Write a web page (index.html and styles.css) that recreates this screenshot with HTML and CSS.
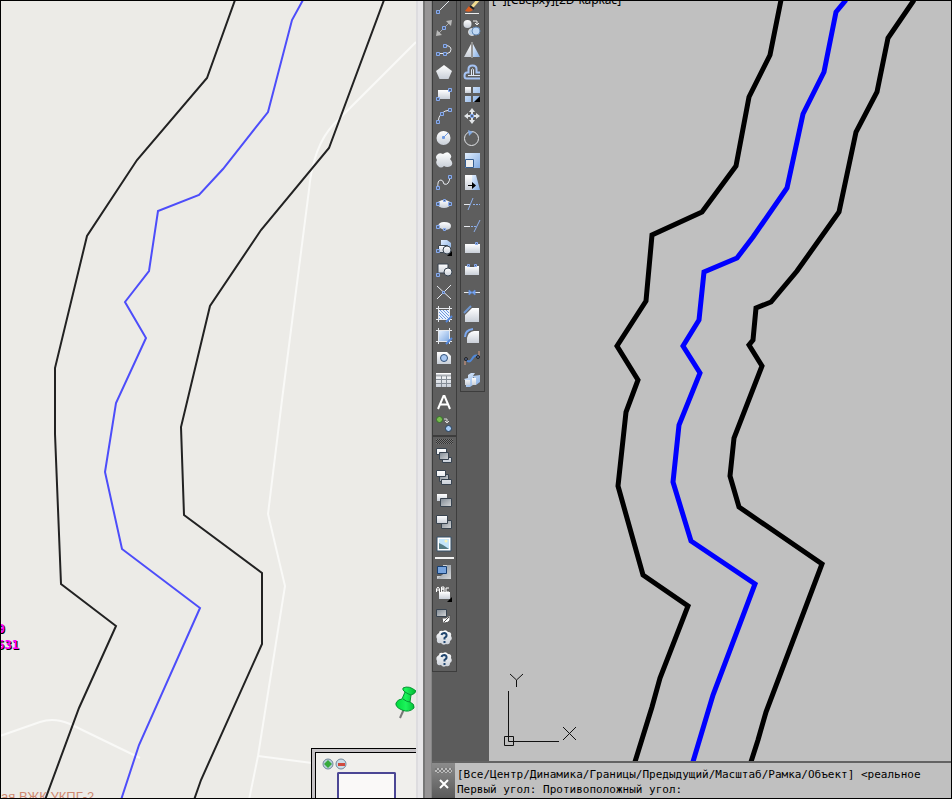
FILE: index.html
```html
<!DOCTYPE html>
<html lang="ru">
<head>
<meta charset="utf-8">
<title>Карта и чертёж</title>
<link rel="stylesheet" href="styles.css">
</head>
<body>
<svg class="defs" aria-hidden="true">
  <defs>
    <linearGradient id="gw" x1="0" y1="0" x2="0" y2="1"><stop offset="0" stop-color="#fff"/><stop offset="1" stop-color="#c9cfd8"/></linearGradient>
    <linearGradient id="gb" x1="0" y1="0" x2="1" y2="1"><stop offset="0" stop-color="#e2efff"/><stop offset="1" stop-color="#82abe2"/></linearGradient>
    <linearGradient id="gg" x1="0" y1="0" x2="1" y2="1"><stop offset="0" stop-color="#7d8791"/><stop offset="1" stop-color="#d5d7d9"/></linearGradient>
    <linearGradient id="pin" x1="0" y1="0" x2="1" y2="0"><stop offset="0" stop-color="#00d93c"/><stop offset=".5" stop-color="#1cf45b"/><stop offset="1" stop-color="#00b62f"/></linearGradient>
    <pattern id="hatch" width="3" height="3" patternUnits="userSpaceOnUse"><path d="M0 0L3 3" stroke="#6d98dc"/></pattern>
    <symbol id="cloud" viewBox="0 0 18 18"><path class="w" d="M4 4Q4 1 8 2Q11 0 13 3Q17 3 16 7Q18 10 15 12Q15 16 11 15Q8 17 6 14Q1 15 2 10Q0 6 4 4Z"/><path d="M6.500 6Q7 4 9.500 4Q12 4.500 11.500 7Q11 8 9.500 9V10.500" fill="none" stroke="#21466f" stroke-width="2"/><path d="M8.500 12h2v2h-2z" fill="#21466f"/></symbol>
  </defs>
</svg>
<div class="frame">
  <section class="map" aria-label="Карта">
    <svg class="scene" viewBox="1 1 415 797" preserveAspectRatio="xMinYMin slice">
      <g class="road">
        <path d="M416 42L334 124Q313 146 309 190L282 400L268 514L285 586L258 756L249 800"/>
        <path d="M0 736L40 722Q54 717 70 724L140 758"/>
        <path d="M258 756L312 763"/>
      </g>
      <text class="place" x="1" y="801">ая ВЖК УКПГ-2</text>
      <g class="bank">
        <path d="M235 0L207 78L137 160L87 236L55 368L55 434L61 584L116 626L79 708L45 800"/>
        <path d="M384 0L329 148L261 230L210 306L181 427L184 515L262 573L262 644L201 780L194 800"/>
      </g>
      <path class="stream" d="M303 0L292 20L268 112L223 169L199 195L158 211L149 271L125 302L146 338L116 403L105 472L122 549L200 608L139 745L121 800"/>
      <g class="mark"><text x="5" y="633">9</text><text x="19" y="649">531</text></g>
      <g>
        <path d="M404 709L400 718" stroke="#777" stroke-width="2"/>
        <path d="M403 688Q409 685 416 691Q415 694 411 695L410 702Q415 704 414 708Q409 713 402 710Q395 707 396 703Q398 699 402 699L405 692Q402 690 403 688Z" fill="url(#pin)" stroke="#079534"/>
        <path d="M403 699Q407 702 410 702M405 692Q408 694 411 695" fill="none" stroke="#079534"/>
      </g>
    </svg>
    <div class="overview">
      <div class="overview-body">
        <div class="zooms">
          <button aria-label="Увеличить"><svg width="12" height="12" viewBox="0 0 12 12"><circle cx="6" cy="6" r="5" fill="#b8d0dc" stroke="#71879b"/><path d="M6 2L10 6L6 10L2 6Z" fill="#36aa3c"/></svg></button>
          <button aria-label="Уменьшить"><svg width="12" height="12" viewBox="0 0 12 12"><circle cx="6" cy="6" r="5" fill="#cbdce7" stroke="#71879b"/><path d="M3 5H10V8H3Z" fill="#d04a3e"/></svg></button>
        </div>
        <div class="extent"></div>
      </div>
    </div>
  </section>
  <div class="edge"></div>
  <section class="cad" aria-label="Чертёж">
    <div class="workspace">
      <div class="dock">
        <div class="column">
          <div class="toolbar scrolled">
            <button aria-label="Отрезок"><svg viewBox="0 0 18 18"><path class="lw" d="M3 15L16 2"/><path class="n" d="M1.500 13.500h3v3h-3z"/></svg></button>
            <button aria-label="Прямая"><svg viewBox="0 0 18 18"><path d="M4 14L15 3" stroke="#aaa"/><path d="M1 17L2 11L7 16ZM17 1L11 2L16 7Z" fill="#b8b8b8"/><path class="n" d="M7.500 7.500h3v3h-3z"/></svg></button>
            <button aria-label="Полилиния"><svg viewBox="0 0 18 18"><path class="lw" d="M3 12.500H12Q16 12 16 8.500Q16 5 11 4.500"/><path class="n" d="M1.500 11.500h3v3h-3zM8.500 11.500h3v3h-3zM8.500 3.500h3v3h-3z"/></svg></button>
            <button aria-label="Многоугольник"><svg viewBox="0 0 18 18"><path class="w" d="M9 2L17 8L13.500 16H4.500L1 8Z"/></svg></button>
            <button aria-label="Прямоугольник"><svg viewBox="0 0 18 18"><path class="w" d="M3 5H15V14H3Z"/><path class="n" d="M1.500 12.500h3v3h-3zM13.500 3.500h3v3h-3z"/></svg></button>
            <button aria-label="Дуга"><svg viewBox="0 0 18 18"><path class="lw" d="M3 15Q4 4 15 3"/><path class="n" d="M1.500 13.500h3v3h-3zM5.500 5.500h3v3h-3zM13.500 1.500h3v3h-3z"/></svg></button>
            <button aria-label="Круг"><svg viewBox="0 0 18 18"><circle class="w" cx="8.500" cy="9" r="7"/><path d="M8 9L13 4" stroke="#6f9ae2"/><path d="M7.500 7.500h2v2h-2z" fill="none" stroke="#6f9ae2"/></svg></button>
            <button aria-label="Облако"><svg viewBox="0 0 18 18"><path class="w" d="M2 4Q4 1 8 3Q12 0 14 2Q18 5 15 8Q19 12 16 15Q12 17 9 15Q6 18 3 15Q0 12 2 9Q0 6 2 4Z"/></svg></button>
            <button aria-label="Сплайн"><svg viewBox="0 0 18 18"><path class="lw" d="M3 15Q2 7 6 7Q8 7 9 11Q14 13 15 4"/><path class="n" d="M1.500 13.500h3v3h-3zM13.500 2.500h3v3h-3z"/></svg></button>
            <button aria-label="Эллипс"><svg viewBox="0 0 18 18"><ellipse class="w" cx="9" cy="9" rx="6.500" ry="4"/><path class="n" d="M1.500 7.500h3v3h-3zM13.500 7.500h3v3h-3z"/><path class="n" d="M8.500 4.500h2v2h-2z"/></svg></button>
            <button aria-label="Эллиптическая дуга"><svg viewBox="0 0 18 18"><path class="w" d="M3 9Q4 5 9 5Q16 5 16 9Q16 13 9 13L5 11Z"/><path class="n" d="M1.500 8.500h3v3h-3zM8.500 11.500h2v2h-2z"/></svg></button>
            <button aria-label="Вставить блок"><svg viewBox="0 0 18 18"><path class="b" d="M6 1H12L16 4V11H6Z"/><path class="w o" d="M3.500 6.500H12.500V13.500H3.500Z"/><circle class="w o" cx="12" cy="11" r="4"/><path class="n" d="M1.500 10.500h3v3h-3z"/><path d="M17 12V17H12Z"/></svg></button>
            <button aria-label="Создать блок"><svg viewBox="0 0 18 18"><path class="w o" d="M3 3H13V12H3Z"/><circle class="w o" cx="13" cy="11" r="4"/><path class="n" d="M1.500 12.500h3v3h-3z"/></svg></button>
            <button aria-label="Точка"><svg viewBox="0 0 18 18"><path class="lw" d="M2 3L16 16M2 16L16 2"/><path class="n" d="M7.500 8.500h2v2h-2z"/></svg></button>
            <button aria-label="Штриховка"><svg viewBox="0 0 18 18"><path fill="#e9f2ff" d="M4 5H14V14H4Z"/><path fill="url(#hatch)" d="M4 5H14V14H4Z"/><path class="lw" d="M1 3.500H17M1 14.500H17M3.500 1V17M14.500 1V17"/><path d="M11 17L17 11" stroke="#5588dc" stroke-width="2"/></svg></button>
            <button aria-label="Градиент"><svg viewBox="0 0 18 18"><path class="b" d="M4 4H14V14H4Z"/><path class="lw" d="M1 3.500H17M1 14.500H17M3.500 1V17M14.500 1V17"/><path d="M11 17L17 11" stroke="#5588dc" stroke-width="2"/></svg></button>
            <button aria-label="Область"><svg viewBox="0 0 18 18"><path class="w" d="M2 3H12L16 7V15H2Z"/><circle cx="9" cy="9" r="3.500" fill="#a7c7f2" stroke="#305078"/></svg></button>
            <button aria-label="Таблица"><svg viewBox="0 0 18 18"><path class="w" d="M1 2H16V16H1Z"/><path d="M1 4.500H16" stroke="#a9adb3" stroke-width="2"/><path d="M1 8.500H16M1 12.500H16M6.500 5V16M11.500 5V16" stroke="#858d96"/></svg></button>
            <button aria-label="Текст"><svg viewBox="0 0 18 18"><path d="M3 16L8.500 3H9.500L15 16M5 11.500H13" fill="none" stroke="#fff" stroke-width="2"/></svg></button>
            <button aria-label="Добавить выбранное"><svg viewBox="0 0 18 18"><circle cx="4.500" cy="4.500" r="3" fill="#79bd50" stroke="#35702b"/><path d="M9 4H12V8M10 6L12 8L14 6" fill="none" stroke="#ddd"/><circle cx="13.500" cy="13.500" r="3" fill="#a8cdf8" stroke="#233d5b"/></svg></button>
          </div>
          <div class="toolbar order">
            <div class="grip"></div>
            <button aria-label="На передний план"><svg viewBox="0 0 18 18"><path class="w o" d="M1.500 1.500H11.500V7.500H1.500ZM7.500 10.500H16.500V15.500H7.500Z"/><path class="g" d="M4.500 5.500H13.500V12.500H4.500Z"/></svg></button>
            <button aria-label="На задний план"><svg viewBox="0 0 18 18"><path class="g" d="M4.500 5.500H13.500V12.500H4.500Z"/><path class="w o" d="M1.500 1.500H10.500V7.500H1.500ZM6.500 10.500H16.500V15.500H6.500Z"/></svg></button>
            <button aria-label="Перед объектом"><svg viewBox="0 0 18 18"><path class="w" d="M2 3H12V10H2Z"/><path class="g" d="M5.500 7.500H16.500V15.500H5.500Z"/></svg></button>
            <button aria-label="За объектом"><svg viewBox="0 0 18 18"><path class="g" d="M6.500 7.500H16.500V15.500H6.500Z"/><path class="w o" d="M1.500 2.500H12.500V10.500H1.500Z"/></svg></button>
            <button aria-label="Изображение"><svg viewBox="0 0 18 18"><path d="M2 2H16V16H2Z" fill="#fff" stroke="#34516b"/><path d="M4 4H14V14H4Z" fill="#c4e5fa"/><path d="M4 8L8 10L14 14H4Z" fill="#557b83"/><circle cx="11" cy="6" r="1.500" fill="#faf5b8"/></svg></button>
            <hr>
            <button aria-label="Подложка"><svg viewBox="0 0 18 18"><path d="M8 2H16V16H2V13H8Z" fill="#ced0d1"/><path d="M2 16L12 8V2H16V16Z" fill="url(#gg)"/><path d="M2.500 3.500H11.500V10.500H2.500Z" fill="#78a4dd" stroke="#173f72"/></svg></button>
            <button aria-label="Текст наверх"><svg viewBox="0 0 18 18"><path class="w" d="M4 7H15V14H4Z"/><path d="M1.500 7V4L3 2L4.500 4V7M2 5H4M6.500 7V2H9V4H7H9V7H6.500M14 3H11V7H14" fill="none" stroke="#fff"/><path d="M17 12V17H12Z"/></svg></button>
            <button aria-label="Штриховку назад"><svg viewBox="0 0 18 18"><path class="g" d="M1.500 2.500H11.500V9.500H1.500Z"/><path d="M7 11H11L15 8V13Q14 16 8 16Z" fill="#fff" stroke="#555"/><path d="M9 15L14 10" stroke="#555"/></svg></button>
            <button aria-label="Справка"><svg viewBox="0 0 18 18"><use href="#cloud"/></svg></button>
            <button aria-label="Справка по команде"><svg viewBox="0 0 18 18"><use href="#cloud"/></svg></button>
          </div>
        </div>
        <div class="column">
          <div class="toolbar scrolled">
            <button aria-label="Стереть"><svg viewBox="0 0 18 18"><path d="M17 1L9 10" stroke="#f1dc91" stroke-width="3"/><path d="M6 9L10 13Q7 16 2 14Z" fill="#d85d20"/><path d="M7 9L11 12" stroke="#222" stroke-width="2"/><path d="M2 16.500H16" stroke="#eee"/></svg></button>
            <button aria-label="Копировать"><svg viewBox="0 0 18 18"><circle class="w" cx="4.500" cy="5" r="4"/><circle cx="9" cy="13" r="3.500" fill="#b8d1eb" stroke="#ddd"/><circle cx="13" cy="12" r="4" fill="#c0d9f5" stroke="#6389b6"/><path d="M10 2H14V6M12 4L14 6L16 4" fill="none" stroke="#eee"/></svg></button>
            <button aria-label="Зеркало"><svg viewBox="0 0 18 18"><path class="w" d="M8 3V16H1Z"/><path class="b" d="M10 3V16H17Z"/><path d="M9 1V17" stroke="#ccc"/></svg></button>
            <button aria-label="Подобие"><svg viewBox="0 0 18 18"><path d="M17 15.500H3.500Q1.500 15.500 1.500 13Q1.500 9.500 4 9.500H5.500V6Q5.500 2.500 9.500 2.500Q13.500 2.500 13.500 6V9.500H17" fill="none" stroke="#a5c3f4" stroke-width="2"/><path d="M17 12.500H5M8.500 12V6.500Q9.500 5 10.500 6.500V12" fill="none" stroke="#dfe8f6"/></svg></button>
            <button aria-label="Массив"><svg viewBox="0 0 18 18"><path class="w" d="M2 2H8V8H2Z"/><path class="b" d="M10 2H17V8H10ZM2 11H8V17H2ZM10 11H17V17H10Z"/><path d="M17 11V17H11Z"/></svg></button>
            <button aria-label="Перенести"><svg viewBox="0 0 18 18"><path d="M9 1L12 5H10V7H8V5H6ZM9 17L6 13H8V11H10V13H12ZM1 9L5 6V8H7V10H5V12ZM17 9L13 12V10H11V8H13V6Z" fill="#e1e4e7"/><path class="n" d="M7.500 7.500h3v3h-3z"/></svg></button>
            <button aria-label="Повернуть"><svg viewBox="0 0 18 18"><circle cx="8.500" cy="9.500" r="7" fill="none" stroke="#e2e4e8"/><path d="M5 1L10 3L6 7Z" fill="#82a9e2"/></svg></button>
            <button aria-label="Масштаб"><svg viewBox="0 0 18 18"><path class="b" d="M2 2H17V17H2Z"/><path d="M2.500 8.500H10.500V16.500H2.500Z" fill="#eee" stroke="#365e91"/></svg></button>
            <button aria-label="Растянуть"><svg viewBox="0 0 18 18"><path class="w" d="M2 2H9V17H2Z"/><path class="b" d="M9 2H13L17 17H9Z"/><path d="M5 12.500H11" stroke="#000" stroke-width="1"/><path d="M9 9L13 12.500L9 16Z"/></svg></button>
            <button aria-label="Обрезать"><svg viewBox="0 0 18 18"><path class="lw" d="M1 9.500H7"/><path d="M10 9.500H17" stroke="#8dafeb" stroke-dasharray="2 1"/><path d="M5 15L10 3" stroke="#8dafeb"/></svg></button>
            <button aria-label="Удлинить"><svg viewBox="0 0 18 18"><path class="lw" d="M1 9.500H7"/><path d="M8 9.500H13" stroke="#8dafeb" stroke-dasharray="2 1"/><path d="M11 15L17 3" stroke="#8dafeb"/></svg></button>
            <button aria-label="Разорвать в точке"><svg viewBox="0 0 18 18"><path class="w" d="M2 5H17V14H2Z"/><path class="n" d="M12.500 3.500h2v2h-2z"/></svg></button>
            <button aria-label="Разорвать"><svg viewBox="0 0 18 18"><path class="w" d="M2 5H16V14H2Z"/><path d="M6 5H12" stroke="#555" stroke-width="2"/><path class="n" d="M4.500 3.500h2v2h-2zM11.500 3.500h2v2h-2z"/></svg></button>
            <button aria-label="Соединить"><svg viewBox="0 0 18 18"><path class="lw" d="M1 9.500H17"/><path d="M6 7L9 9.500L6 12ZM12 7L9 9.500L12 12Z" fill="#80acf5" stroke="#608dd9"/></svg></button>
            <button aria-label="Фаска"><svg viewBox="0 0 18 18"><path class="w" d="M9 3H16V17H2V10Z"/><path d="M1 8L8 1" stroke="#7096cf" stroke-width="2"/></svg></button>
            <button aria-label="Сопряжение"><svg viewBox="0 0 18 18"><path class="w" d="M11 4H16V16H4V11Q5 5 11 4Z"/><path d="M2 10Q2 3 10 2" fill="none" stroke="#7ca8ee" stroke-width="2"/></svg></button>
            <button aria-label="Соединить кривые"><svg viewBox="0 0 18 18"><path d="M3 10Q6 15 9 10Q12 5 15 7" fill="none" stroke="#5289d8" stroke-width="2"/><path d="M2 16V12M16 7V2" stroke="#db9e83"/><circle cx="3" cy="10" r="1.500" stroke="#222" fill="#568"/><circle cx="15" cy="8" r="1.500" stroke="#222" fill="#568"/></svg></button>
            <button aria-label="Расчленить"><svg viewBox="0 0 18 18"><path class="b" d="M5 4L8 2H12L10 5L17 4V11L13 14V8L10 6V14L7 16H3V10L1 8L5 7Z"/><path class="w" d="M2 9H7V14H2ZM9 7H13V14H9Z"/></svg></button>
          </div>
        </div>
      </div>
      <svg class="scene canvas" viewBox="489 1 462 760" preserveAspectRatio="xMinYMin slice">
        <text class="view" x="492" y="4">[−][Сверху][2D-каркас]</text>
        <g class="cad-bank">
          <path d="M781 0L770 55L749 97L736 166L702 212L652 235L646 301L617 346L638 380L626 412L618 486L643 575L688 606L660 678L652 707L634 765"/>
          <path d="M914 0L888 38L877 92L856 132L839 212L797 271L771 302L756 308L753 340L749 345L762 366L734 438L730 476L739 507L822 564L766 712L758 740L750 765"/>
        </g>
        <path class="cad-stream" d="M846 0L836 12L824 72L803 114L787 188L753 237L737 258L704 272L699 320L683 346L700 373L679 425L673 482L691 541L755 584L713 695L692 765"/>
        <path class="axes" d="M508.500 691V741.500H559M504.500 736.500H513.500V745.500H504.500ZM510 674L516.500 680L523 674M516.500 680V687M563 727L576 740M576 727L563 740"/>
      </svg>
    </div>
    <div class="command">
      <div class="handle">
        <div class="grip light"></div>
        <button aria-label="Закрыть"><svg viewBox="0 0 10 10"><path d="M1 1L9 9M9 1L1 9" stroke="#fff" stroke-width="2"/></svg></button>
      </div>
      <div class="log">
        <p>[Все/Центр/Динамика/Границы/Предыдущий/Масштаб/Рамка/Объект] &lt;реальное</p>
        <p>Первый угол: Противоположный угол:</p>
      </div>
    </div>
  </section>
</div>
</body>
</html>
```
FILE: styles.css
```css
* { box-sizing: border-box; }
body { margin: 0; }
button { border: 0; padding: 0; background: none; display: block; }
.defs { position: absolute; width: 0; height: 0; }

.frame { display: flex; height: 100vh; border: 1px solid #000; overflow: hidden; }

.map { position: relative; flex: 415 1 0; min-width: 0; background: #ecebe7; overflow: hidden; }
.scene { display: block; width: 100%; height: 100%; }
.road { fill: none; stroke: #f9f9f7; stroke-width: 2; }
.bank { fill: none; stroke: #222; stroke-width: 2; }
.stream { fill: none; stroke: #4d4dfa; stroke-width: 2; }
.place { font: 13px "Liberation Sans", sans-serif; fill: #cf8a72; }
.mark { font: bold 12px "DejaVu Sans Mono", monospace; fill: #f0f; text-anchor: end; text-shadow: 1px 1px #000; }

.overview { position: absolute; right: 0; bottom: 0; width: 105px; height: 50px; padding: 3px 0 0 3px; border: solid #000; border-width: 1px 0 0 1px; background: #c5c2c5; }
.overview-body { height: 100%; padding: 5px 20px 0 6px; border: solid #000; border-width: 1px 0 0 1px; background: #f0efec; }
.zooms { display: flex; gap: 1px; }
.zooms svg { display: block; }
.extent { height: 28px; margin: 2px 0 0 15px; border: 2px solid #4c4795; border-bottom: 0; border-radius: 2px 2px 0 0; background: #faf9f8; }

.edge { flex: none; width: 16px; background: linear-gradient(90deg, #dddcdf 0 2px, #e8e7e9 2px 7px, #777 7px 9px, #979596 9px 15px, #858585 15px); }

.cad { flex: 519 1 0; min-width: 0; display: flex; flex-direction: column; }
.workspace { flex: 1; min-height: 0; display: flex; background: #5c5c5c; }
.dock { flex: none; width: 57px; display: flex; align-items: flex-start; gap: 3px; overflow: hidden; }
.column { display: flex; flex-direction: column; }
.toolbar { width: 25px; border: 1px solid #3d3d3d; background: #5e5e5e; }
.toolbar.scrolled { margin-top: -7px; }
.toolbar button { width: 23px; height: 22px; }
.toolbar svg { display: block; width: 18px; height: 18px; margin: 2px; }
.toolbar hr { height: 2px; margin: 2px; border: 0; background: #f2f2f2; }
.grip { height: 5px; margin: 2px 3px 1px; background: repeating-conic-gradient(#333 0 25%, #777 0 50%) 0 0 / 2px 2px; }

.w { fill: url(#gw); }
.b { fill: url(#gb); }
.g { fill: url(#gg); stroke: #38434f; }
.o { stroke: #38434f; }
.n { fill: #52637c; stroke: #86aaf0; }
.lw { fill: none; stroke: #e6e9ee; }

.canvas { flex: 1; width: auto; min-width: 0; background: #c0c0c0; }
.view { font: 12px "Noto Sans", sans-serif; }
.cad-bank { fill: none; stroke: #000; stroke-width: 5; }
.cad-stream { fill: none; stroke: #00f; stroke-width: 5; }
.axes { fill: none; stroke: #111; }

.command { flex: none; display: flex; height: 37px; border-top: 2px solid #636363; background: #c0c0c0; }
.handle { flex: none; width: 23px; background: linear-gradient(#8c8c8c, #5a5a5a); }
.grip.light { margin: 5px 3px 6px; background: repeating-conic-gradient(#bbb 0 25%, #777 0 50%) 0 0 / 4px 4px; }
.handle button { margin: 0 auto; width: 10px; height: 10px; }
.handle svg { display: block; }
.log { flex: 1; min-width: 0; padding: 4px 0 0 2px; overflow: hidden; white-space: nowrap; font: 11px/15px "DejaVu Sans Mono", monospace; color: #000; }
.log p { margin: 0; }
```
